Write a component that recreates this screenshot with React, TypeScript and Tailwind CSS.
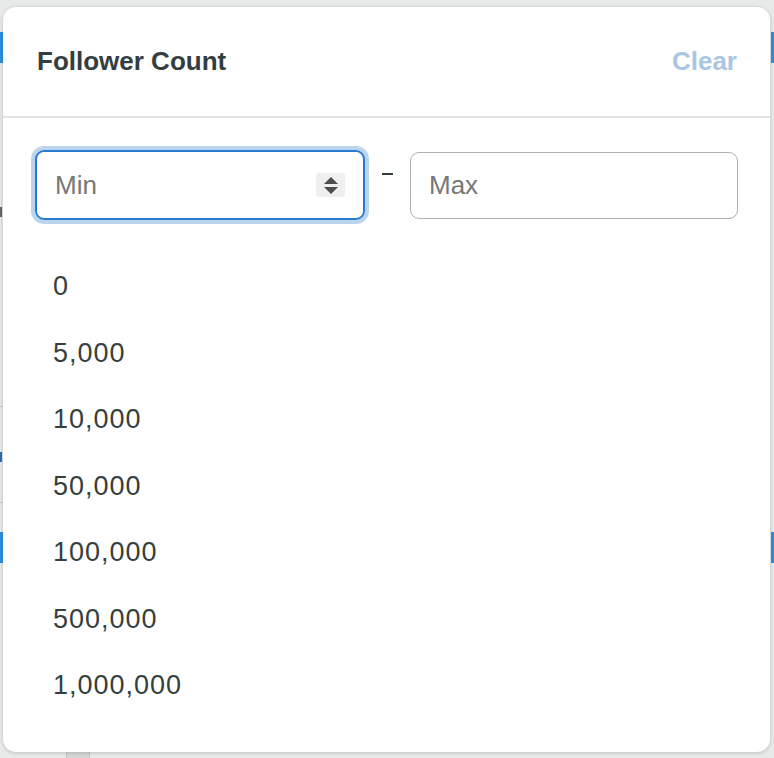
import React from "react";

const options = ["0", "5,000", "10,000", "50,000", "100,000", "500,000", "1,000,000"];

function Spinner() {
  return (
    <div className="flex h-[24px] w-[29px] flex-col items-center justify-center gap-[3px] rounded-[3px] bg-[#efefef]">
      <svg width="14" height="7" viewBox="0 0 14 7">
        <path d="M7 0 L14 7 L0 7 Z" fill="#4d4d4d" />
      </svg>
      <svg width="14" height="7" viewBox="0 0 14 7">
        <path d="M0 0 L14 0 L7 7 Z" fill="#4d4d4d" />
      </svg>
    </div>
  );
}

export default function App() {
  return (
    <div className="relative h-[758px] w-[774px] overflow-hidden bg-[#e8e9e9] pl-[3px] pt-[7px] font-['Liberation_Sans',Arial,sans-serif]">
      {/* bits of the page peeking out behind the popover */}
      <div className="absolute left-0 top-[32px] h-[31px] w-[3px] bg-[#2b8fe0]" />
      <div className="absolute left-0 top-[532px] h-[31px] w-[3px] bg-[#2b8fe0]" />
      <div className="absolute right-0 top-[32px] h-[31px] w-[3px] bg-[#2b8fe0]" />
      <div className="absolute right-0 top-[532px] h-[31px] w-[3px] bg-[#2b8fe0]" />
      <div className="absolute left-0 top-[406px] h-px w-[3px] bg-[#c9cbcb]" />
      <div className="absolute left-0 top-[502px] h-px w-[3px] bg-[#c9cbcb]" />
      <div className="absolute left-0 top-[452px] h-[10px] w-[2px] bg-[#2a6fb3]" />
      <div className="absolute left-0 top-[207px] h-[10px] w-[2px] bg-[#666]" />
      <div className="absolute bottom-0 left-[66px] h-[6px] w-[24px] border-x border-[#c4c6c6] bg-[#d6d8d8]" />

      <div className="relative flex h-[745px] w-[767px] flex-col rounded-[13px] bg-white shadow-[0_1px_4px_rgba(0,0,0,0.18)]">
        <div className="flex h-[111px] shrink-0 items-center justify-between border-b-2 border-[#e3e4e4] pl-[34px] pr-[33px]">
          <span className="text-[26px] font-bold text-[#343d3f]">Follower Count</span>
          <span className="text-[26px] font-bold text-[#a9c6e2]">Clear</span>
        </div>

        <div className="flex items-center pl-[32px] pt-[32px]">
          <div className="flex h-[70px] w-[330px] items-center rounded-[9px] border-2 border-[#2a7acd] pl-[18px] pr-[18px] shadow-[0_0_0_4px_#bcd5ee]">
            <input
              readOnly
              placeholder="Min"
              className="min-w-0 flex-1 bg-transparent font-['Liberation_Sans',Arial,sans-serif] text-[26px] text-[#333] outline-none placeholder:text-[#777]"
            />
            <Spinner />
          </div>
          <div className="flex w-[45px] justify-center pb-[22px]">
            <div className="h-[2px] w-[11px] bg-[#343d3f]" />
          </div>
          <div className="flex h-[67px] w-[328px] items-center rounded-[9px] border-[1.5px] border-[#aeb0b0] pl-[18px]">
            <input
              readOnly
              placeholder="Max"
              className="min-w-0 flex-1 bg-transparent font-['Liberation_Sans',Arial,sans-serif] text-[26px] text-[#333] outline-none placeholder:text-[#777]"
            />
          </div>
        </div>

        <ul className="mt-[33px] pl-[50px]">
          {options.map((o) => (
            <li key={o} className="flex h-[66.5px] items-center text-[27px] tracking-[1px] text-[#363f40]">
              {o}
            </li>
          ))}
        </ul>
      </div>
    </div>
  );
}
